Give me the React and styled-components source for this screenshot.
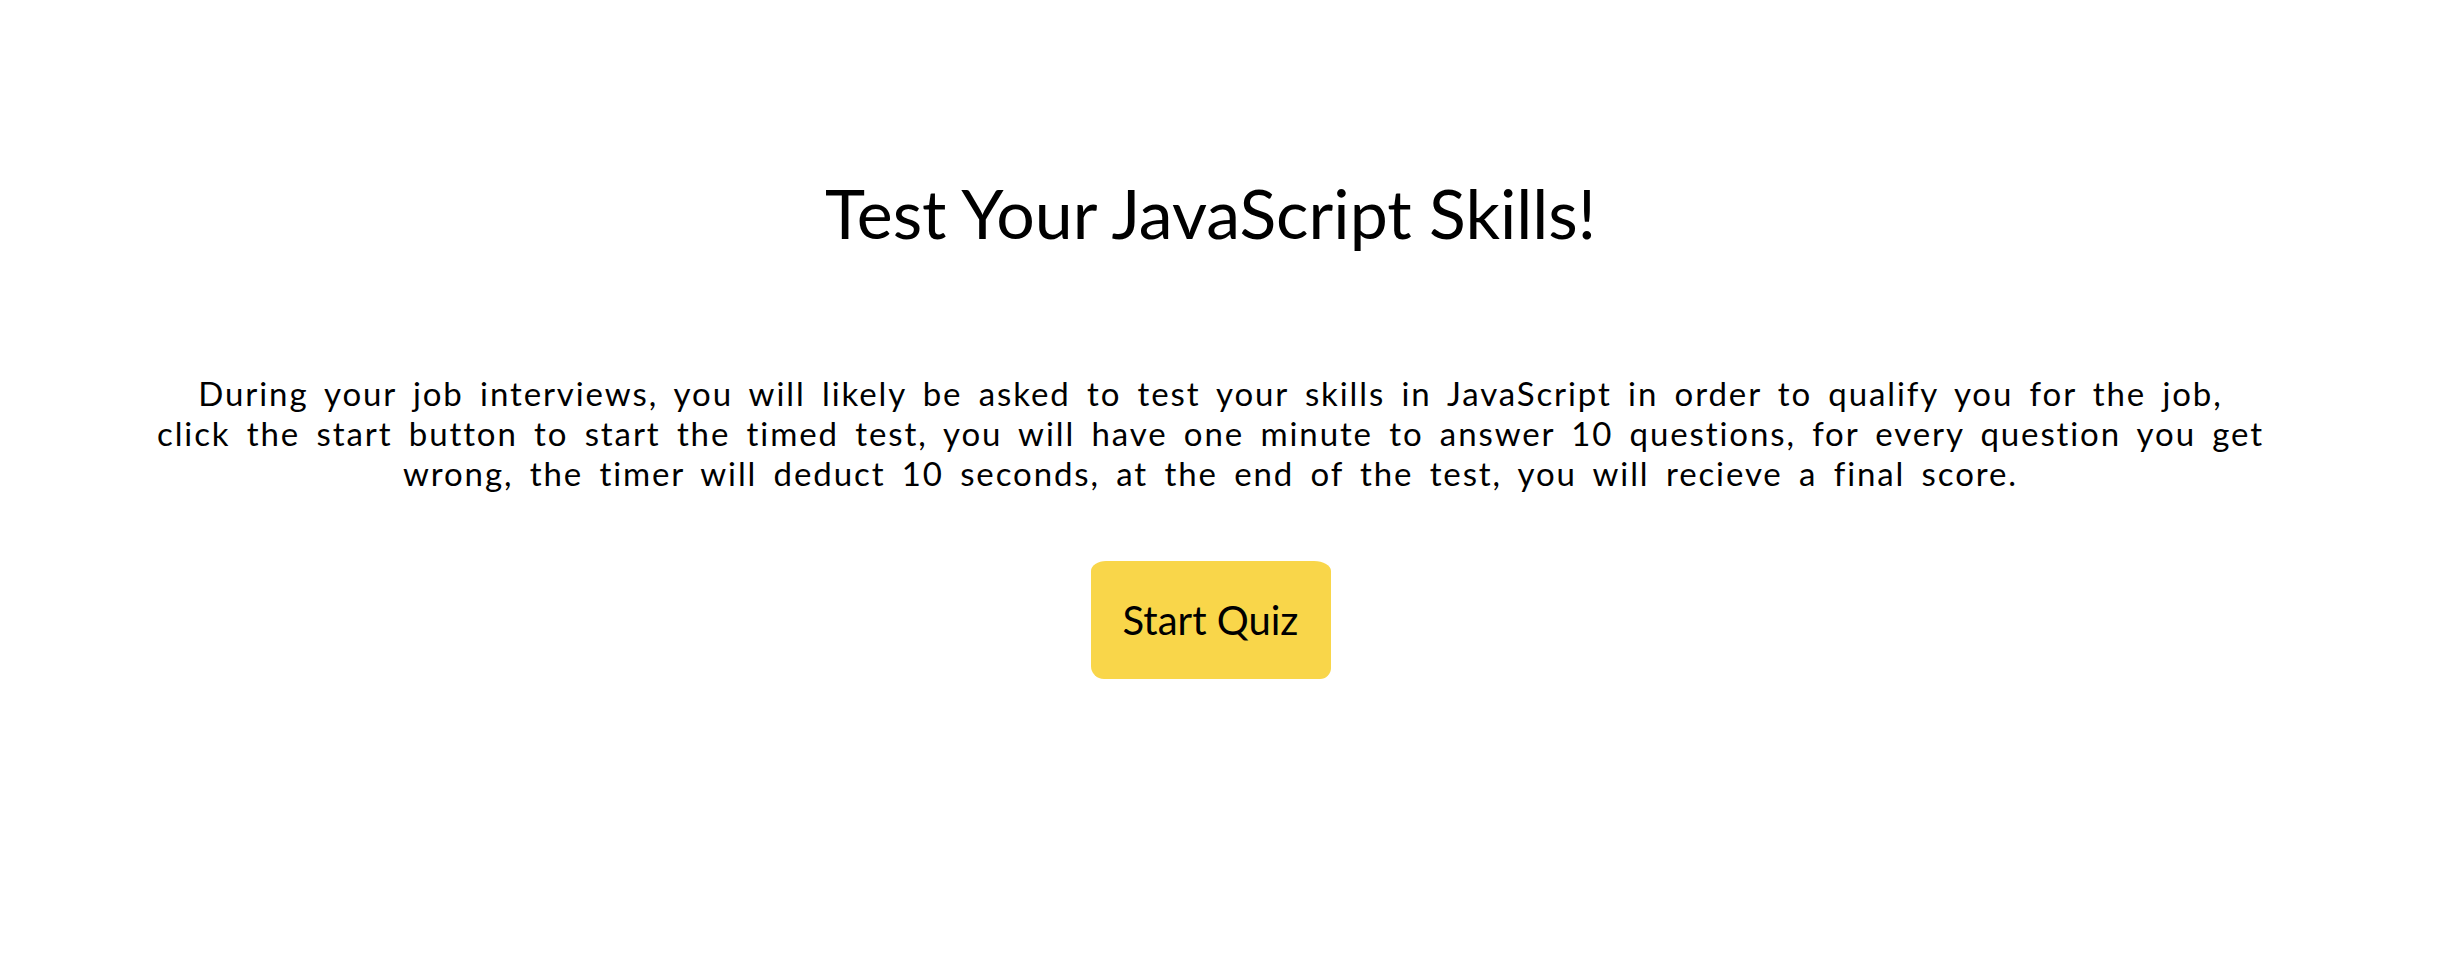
import React from "react";
import styled, { createGlobalStyle } from "styled-components";

const GlobalStyle = createGlobalStyle`
  body {
    margin: 0;
    background: #ffffff;
    font-family: "Lato", "Noto Sans", sans-serif;
    color: #000000;
  }
`;

const Page = styled.main`
  display: flex;
  flex-direction: column;
  align-items: center;
  padding: 172px 17px 0 0;
  text-align: center;
`;

const Title = styled.h1`
  margin: 0;
  font-size: 68px;
  font-weight: 400;
  line-height: 1.2;
`;

const Intro = styled.p`
  margin: 119px 0 0;
  font-size: 33px;
  line-height: 40px;
  letter-spacing: 1.9px;
  word-spacing: 6px;
  font-weight: 400;
`;

const StartButton = styled.button`
  margin-top: 68px;
  width: 240px;
  height: 118px;
  border: none;
  border-radius: 15px 17px 11px 13px / 10px 10px 11px 13px;
  background: #f9d64a;
  font-family: inherit;
  font-size: 40px;
  color: #000000;
  cursor: pointer;
`;

function App() {
  return (
    <>
      <GlobalStyle />
      <Page>
        <Title>Test Your JavaScript Skills!</Title>
        <Intro>
          During your job interviews, you will likely be asked to test your skills in JavaScript in order to qualify you for the job,
          <br />
          click the start button to start the timed test, you will have one minute to answer 10 questions, for every question you get
          <br />
          wrong, the timer will deduct 10 seconds, at the end of the test, you will recieve a final score.
        </Intro>
        <StartButton>Start Quiz</StartButton>
      </Page>
    </>
  );
}

export default App;
